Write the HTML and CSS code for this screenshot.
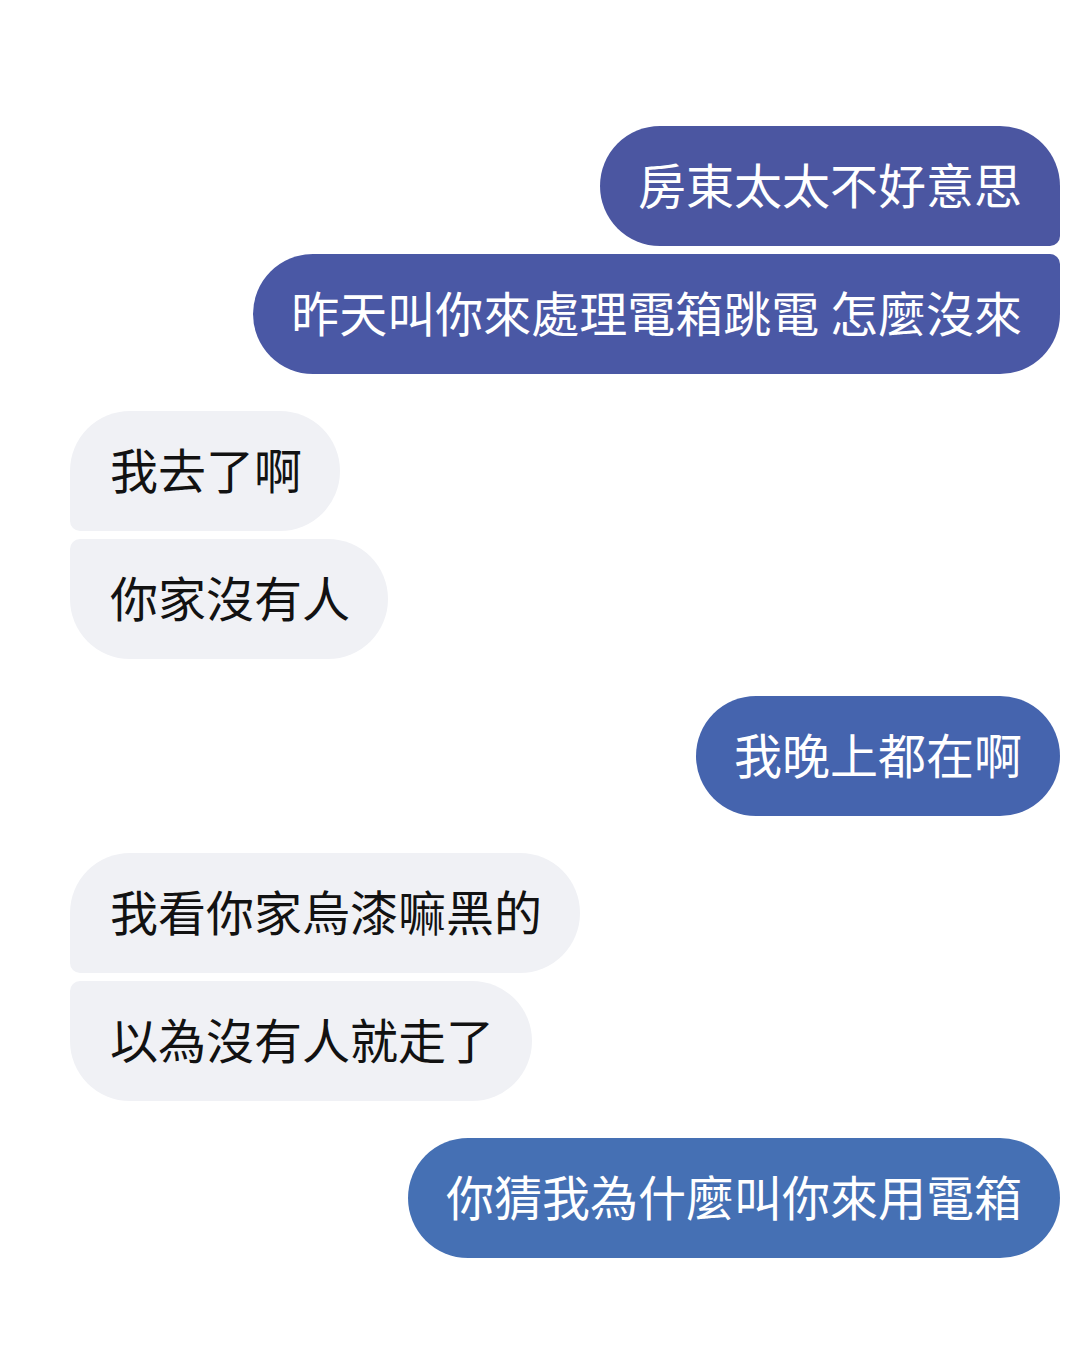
FILE: index.html
```html
<!DOCTYPE html>
<html lang="zh-Hant">
<head>
<meta charset="utf-8">
<title>Chat</title>
<link rel="stylesheet" href="styles.css">
</head>
<body>
<div class="chat">
  <div class="group out">
    <div class="bubble out-a first">房東太太不好意思</div>
    <div class="bubble out-b last">昨天叫你來處理電箱跳電 怎麼沒來</div>
  </div>
  <div class="group in">
    <div class="bubble in-bubble first">我去了啊</div>
    <div class="bubble in-bubble last">你家沒有人</div>
  </div>
  <div class="group out">
    <div class="bubble out-c">我晚上都在啊</div>
  </div>
  <div class="group in">
    <div class="bubble in-bubble first">我看你家烏漆嘛黑的</div>
    <div class="bubble in-bubble last">以為沒有人就走了</div>
  </div>
  <div class="group out">
    <div class="bubble out-d">你猜我為什麼叫你來用電箱</div>
  </div>
</div>
</body>
</html>
```
FILE: styles.css
```css
html, body {
  margin: 0;
  padding: 0;
  background: #ffffff;
}
body {
  font-family: "Noto Sans CJK TC", "Noto Sans CJK SC", sans-serif;
  width: 1080px;
  height: 1350px;
  overflow: hidden;
}
.chat {
  display: flex;
  flex-direction: column;
  gap: 37px;
  padding: 126px 20px 0 70px;
}
.group {
  display: flex;
  flex-direction: column;
  gap: 8px;
}
.group.out { align-items: flex-end; }
.group.in { align-items: flex-start; }
.bubble {
  box-sizing: border-box;
  height: 120px;
  padding: 0 38px 6px;
  font-size: 48px;
  line-height: 114px;
  border-radius: 60px;
  white-space: pre;
  letter-spacing: 0;
}
.out .bubble { color: #ffffff; }
.out-a { background: #4b56a1; }
.out-b { background: #4a58a5; }
.out-c { background: #4564ae; }
.out-d { background: #4570b4; }
.out .first { border-bottom-right-radius: 10px; }
.out .last { border-top-right-radius: 10px; }
.in-bubble {
  background: #f0f1f5;
  color: #121212;
  padding: 0 38px 6px 40px;
}
.in .first { border-bottom-left-radius: 10px; }
.in .last { border-top-left-radius: 10px; }
```
